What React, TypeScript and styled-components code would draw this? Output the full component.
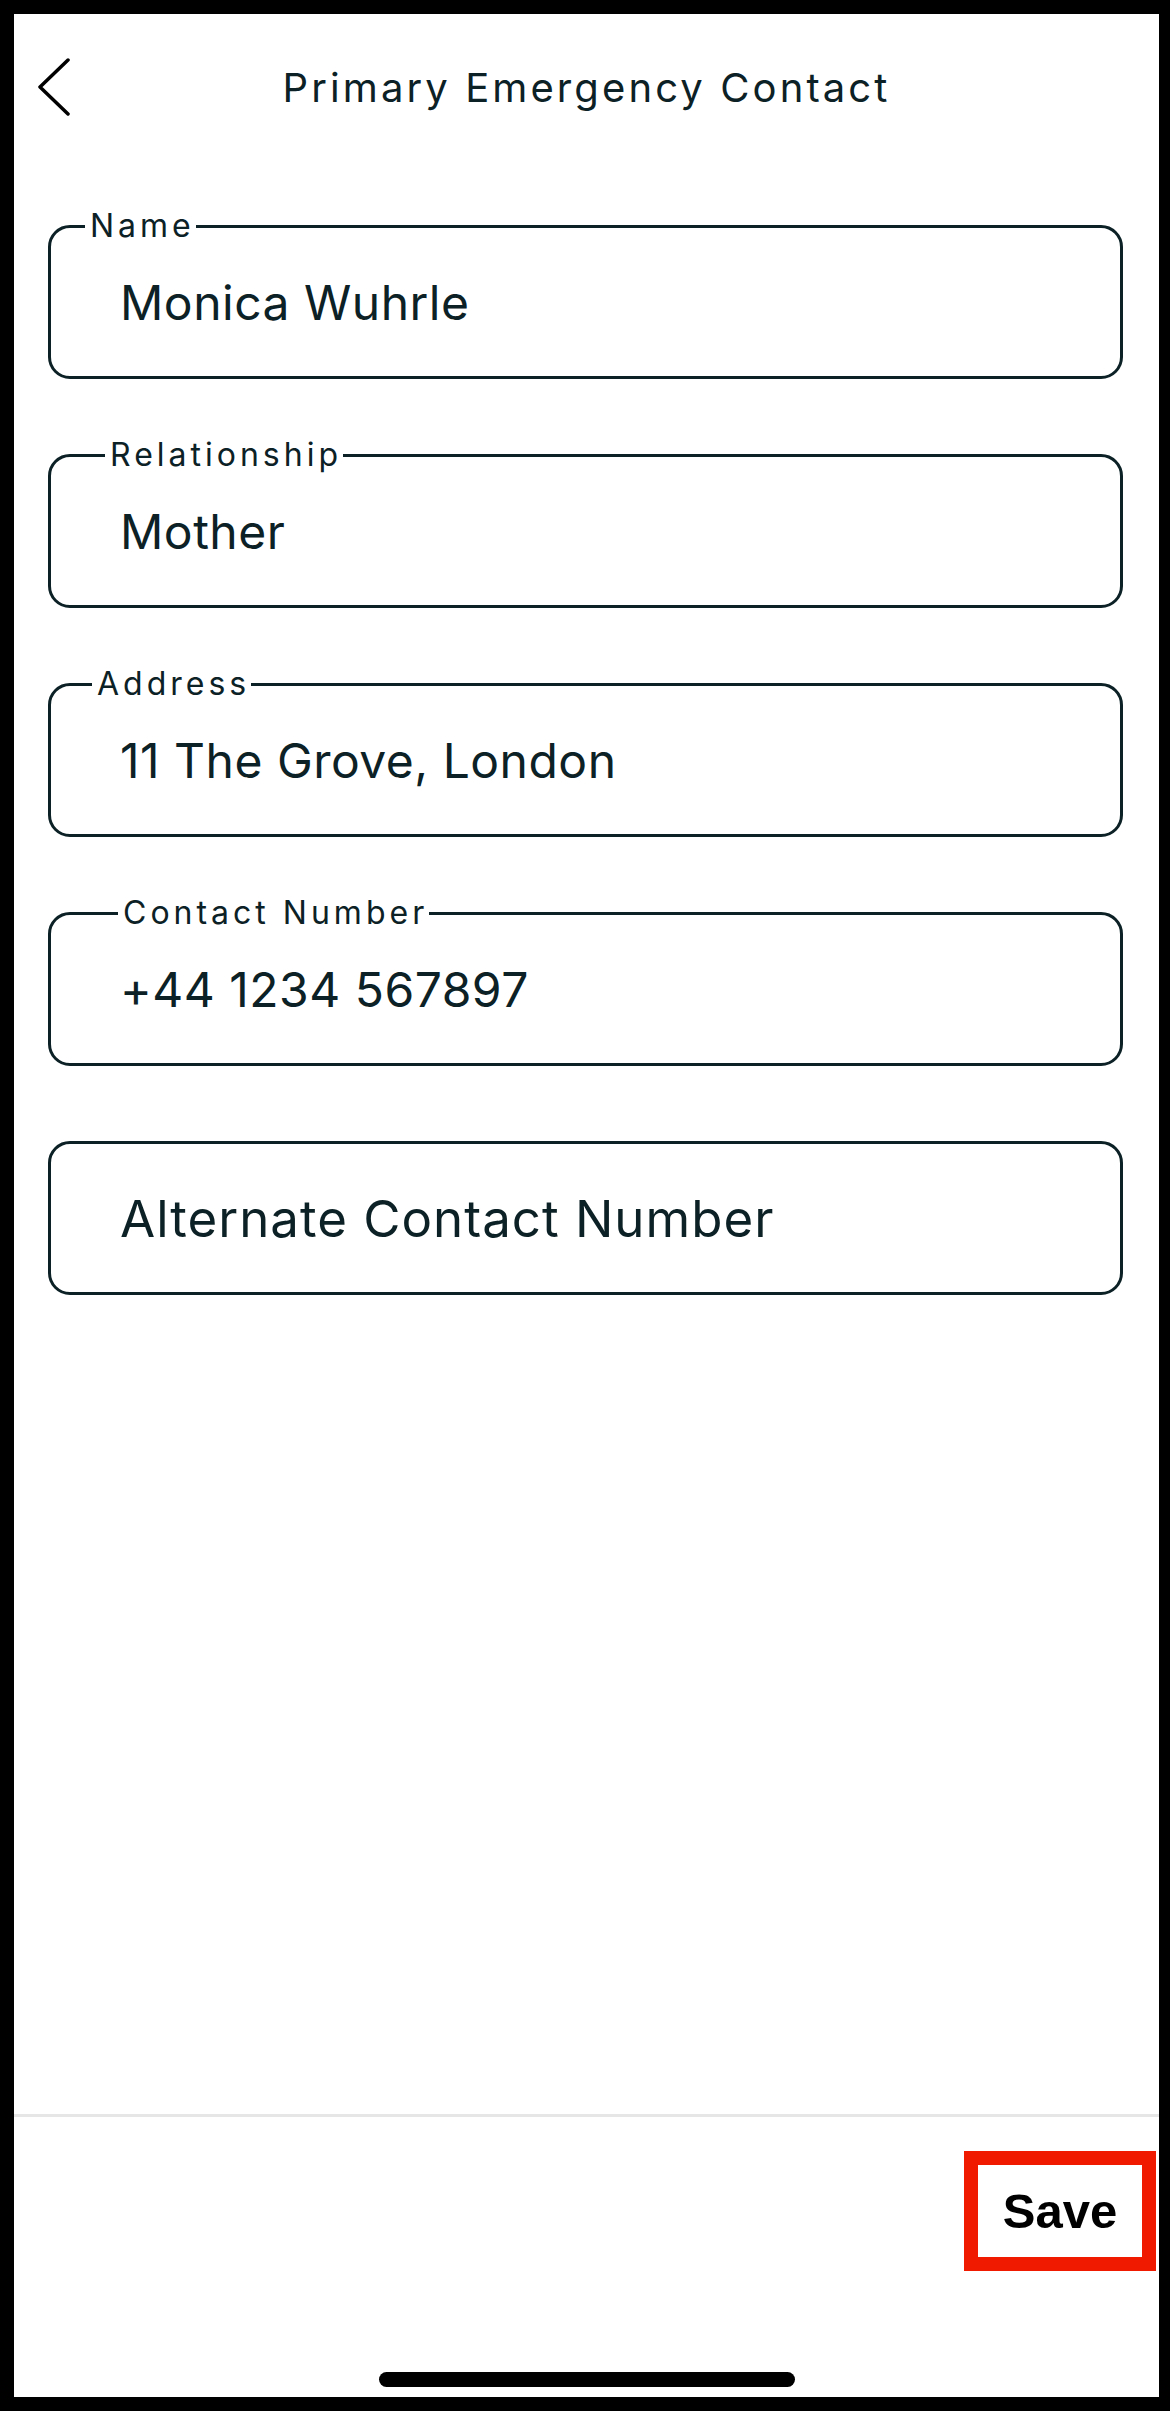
import React from 'react'
import styled, { createGlobalStyle } from 'styled-components'

const INK = '#0c2125'

interface IField {
    label?: string
    offset?: number
    value: string
}

const fields: Array<IField> = [
    { label: 'Name', offset: 34, value: 'Monica Wuhrle' },
    { label: 'Relationship', offset: 54, value: 'Mother' },
    { label: 'Address', offset: 41, value: '11 The Grove, London' },
    { label: 'Contact Number', offset: 67, value: '+44 1234 567897' },
    { value: 'Alternate Contact Number' },
]

const App: React.FC = () => {
    return (
        <React.Fragment>
            <GlobalStyle />
            <Screen>
                <Header>
                    <BackButton aria-label="Back">
                        <svg width="34" height="58" viewBox="0 0 34 58" fill="none">
                            <polyline
                                points="31,2 3,29 31,56"
                                stroke="#000"
                                strokeWidth="3.5"
                                strokeLinecap="round"
                                strokeLinejoin="round"
                            />
                        </svg>
                    </BackButton>
                    <Title>Primary Emergency Contact</Title>
                    <span />
                </Header>

                <Form>
                    {fields.map((field) => (
                        <Field key={field.value}>
                            {field.label && (
                                <Legend offset={field.offset || 0}>{field.label}</Legend>
                            )}
                            <Value placeholder={!field.label}>{field.value}</Value>
                        </Field>
                    ))}
                </Form>

                <Divider />

                <Footer>
                    <SaveRow>
                        <SaveButton>Save</SaveButton>
                    </SaveRow>
                    <HomeIndicator />
                </Footer>
            </Screen>
        </React.Fragment>
    )
}

export default App

const GlobalStyle = createGlobalStyle`
    * {
        box-sizing: border-box;
    }
    body {
        margin: 0;
        background: #ffffff;
        font-family: Inter, 'Noto Sans', sans-serif;
    }
`

const Screen = styled.div`
    width: 1170px;
    height: 2411px;
    display: flex;
    flex-direction: column;
    background: #ffffff;
    border: 14px solid #000000;
    border-right-width: 11px;
`

const Header = styled.div`
    height: 146px;
    display: grid;
    grid-template-columns: 1fr auto 1fr;
    align-items: center;
`

const BackButton = styled.button`
    justify-self: start;
    display: flex;
    align-items: center;
    padding: 0;
    margin-left: 23px;
    border: none;
    background: transparent;
    cursor: pointer;
`

const Title = styled.div`
    font-size: 40px;
    color: ${INK};
    letter-spacing: 3.1px;
`

const Form = styled.div`
    flex: 1;
    display: flex;
    flex-direction: column;
    gap: 75px;
    padding: 65px 36px 0 34px;
`

const Field = styled.div`
    position: relative;
    height: 154px;
    display: flex;
    align-items: center;
    padding-left: 69px;
    border: 3px solid ${INK};
    border-radius: 22px;
`

const Legend = styled.span<{ offset: number }>`
    position: absolute;
    top: -2px;
    left: ${(p) => p.offset}px;
    transform: translateY(-50%);
    padding: 0 1px 0 5px;
    background: #ffffff;
    font-size: 32px;
    line-height: 1;
    letter-spacing: 4px;
    color: ${INK};
`

const Value = styled.div<{ placeholder?: boolean }>`
    font-size: ${(p) => (p.placeholder ? 51 : 48)}px;
    color: ${INK};
    letter-spacing: ${(p) => (p.placeholder ? 1 : 0.5)}px;
`

const Divider = styled.div`
    height: 3px;
    background: #e6e6e6;
`

const Footer = styled.div`
    height: 280px;
    display: flex;
    flex-direction: column;
    align-items: center;
    padding-top: 34px;
`

const SaveRow = styled.div`
    align-self: stretch;
    display: flex;
    justify-content: flex-end;
    padding-right: 3px;
`

const SaveButton = styled.button`
    width: 192px;
    height: 120px;
    border: 14px solid #f01a00;
    background: #ffffff;
    font-family: 'Liberation Sans', Arial, sans-serif;
    font-weight: 700;
    font-size: 49px;
    color: #000000;
    padding: 0;
    cursor: pointer;
`

const HomeIndicator = styled.div`
    width: 416px;
    height: 15px;
    margin-top: 101px;
    border-radius: 8px;
    background: #000000;
`
